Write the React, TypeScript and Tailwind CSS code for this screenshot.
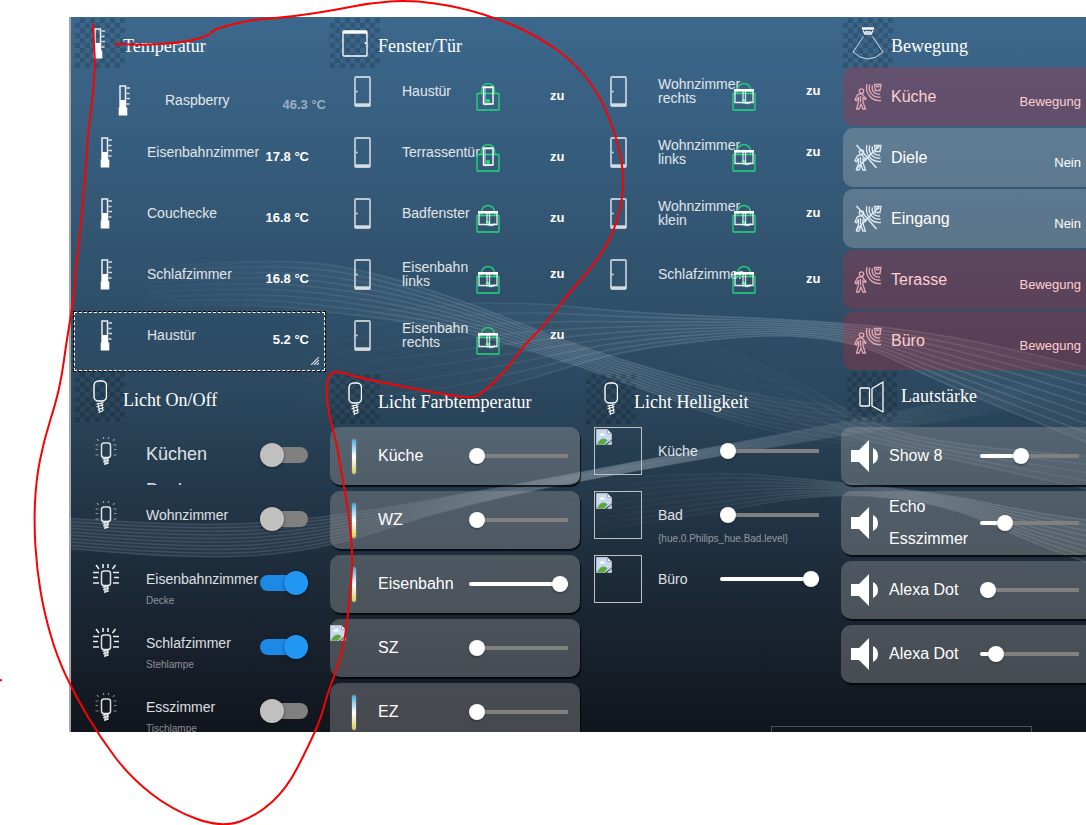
import React, { useState } from "react";

type Point = [number, number];

function smoothPath(points: Point[]): string {
  let d = `M${points[0][0]} ${points[0][1]}`;
  for (let i = 1; i < points.length - 1; i++) {
    const [x, y] = points[i];
    const [nx, ny] = points[i + 1];
    d += ` Q${x} ${y} ${(x + nx) / 2} ${(y + ny) / 2}`;
  }
  const last = points[points.length - 1];
  return d + ` L${last[0]} ${last[1]}`;
}

/* ---------- background ---------- */

type Bundle = { from: Point[]; to: Point[]; count: number; stops: [number, number][] };

const bundles: Bundle[] = [
  {
    from: [[60, 252], [170, 243], [270, 246], [390, 282], [520, 335], [700, 385], [900, 400]],
    to: [[60, 290], [170, 286], [270, 296], [390, 312], [520, 352], [700, 420], [900, 440]],
    count: 9,
    stops: [[0, 0], [0.3, 0.12], [0.6, 0.16], [0.75, 0.06], [1, 0]],
  },
  {
    from: [[200, 310], [330, 290], [450, 284], [560, 296], [760, 304], [880, 318], [1016, 350]],
    to: [[200, 400], [330, 392], [450, 366], [560, 330], [760, 312], [880, 370], [1016, 425]],
    count: 9,
    stops: [[0, 0], [0.2, 0.04], [0.45, 0.14], [0.7, 0.18], [0.85, 0.16], [1, 0.12]],
  },
  {
    from: [[-20, 500], [120, 510], [250, 502], [400, 476], [560, 446], [760, 408], [900, 380], [1016, 350]],
    to: [[-20, 530], [120, 543], [250, 534], [380, 490], [560, 454], [760, 420], [900, 400], [1016, 380]],
    count: 10,
    stops: [[0, 0.13], [0.3, 0.12], [0.55, 0.2], [0.75, 0.08], [1, 0]],
  },
  {
    from: [[480, 470], [620, 452], [760, 464], [880, 478], [960, 495], [1030, 505]],
    to: [[480, 520], [620, 500], [760, 474], [880, 488], [960, 525], [1030, 550]],
    count: 9,
    stops: [[0, 0], [0.35, 0.06], [0.65, 0.18], [1, 0.16]],
  },
  {
    from: [[560, 300], [700, 345], [800, 410], [900, 430], [1030, 440]],
    to: [[560, 320], [700, 400], [800, 425], [900, 446], [1030, 475]],
    count: 5,
    stops: [[0, 0], [0.4, 0.05], [0.65, 0.14], [1, 0.08]],
  },
];

function Waves() {
  return (
    <svg
      className="pointer-events-none absolute inset-0 size-full"
      viewBox="0 0 1016 715"
      preserveAspectRatio="none"
      aria-hidden="true"
    >
      {bundles.map((b, k) => {
        const end = b.from[b.from.length - 1][0];
        return (
          <g key={k} fill="none" stroke={`url(#wave-${k})`} strokeWidth="1.5">
            <defs>
              <linearGradient id={`wave-${k}`} gradientUnits="userSpaceOnUse" x1={b.from[0][0]} y1="0" x2={end} y2="0">
                {b.stops.map(([offset, opacity]) => (
                  <stop key={offset} offset={offset} stopColor="#d3e4f0" stopOpacity={opacity} />
                ))}
              </linearGradient>
            </defs>
            <path
              d={smoothPath(b.from) + smoothPath([...b.to].reverse()).replace("M", " L") + "Z"}
              fill={`url(#wave-${k})`}
              fillOpacity="0.4"
              stroke="none"
            />
            {Array.from({ length: b.count }, (_, i) => {
              const t = i / (b.count - 1);
              const pts = b.from.map((p, j): Point => [
                p[0] + (b.to[j][0] - p[0]) * t,
                p[1] + (b.to[j][1] - p[1]) * t,
              ]);
              return <path key={i} d={smoothPath(pts)} />;
            })}
          </g>
        );
      })}
    </svg>
  );
}

/* ---------- icons ---------- */

function Thermometer() {
  return (
    <svg width="14" height="31" viewBox="0 0 14 31" className="shrink-0" aria-hidden="true">
      <rect x="2" y="1" width="5.500" height="22" fill="none" stroke="#fff" strokeWidth="1.500" strokeOpacity="0.900" />
      <path d="M2 15h5.500v7.500h1.800v8H.7v-8H2z" fill="#fff" />
      <path d="M8.500 3h3.500M8.500 8.500h3M8.500 13.500h3.500M8.500 19h3" stroke="#fff" strokeWidth="1.300" strokeOpacity="0.800" />
    </svg>
  );
}

function Door() {
  return (
    <svg width="17" height="31" viewBox="0 0 17 31" className="shrink-0 opacity-80" aria-hidden="true">
      <rect x="1" y="1" width="15" height="29" rx="1" fill="none" stroke="#fff" strokeOpacity="0.850" strokeWidth="1.800" />
      <path d="M1 28.700h15" stroke="#fff" strokeWidth="2.800" />
      <circle cx="2.800" cy="15.500" r="0.900" fill="#fff" />
    </svg>
  );
}

function Lock({ kind }: { kind: "door" | "window" }) {
  return (
    <svg width="24" height="29" viewBox="0 0 24 29" className="relative shrink-0" aria-hidden="true">
      <path d="M5.500 11V8a6.500 6.500 0 0 1 13 0v3" fill="none" stroke="#24c878" strokeWidth="1.500" />
      <rect x="1" y="11.500" width="22" height="16.500" rx="0.500" fill="none" stroke="#22d97c" strokeWidth="1.300" />
      <circle cx="12" cy="19" r="2.200" fill="#22d97c" />
      {kind === "door" ? (
        <g fill="none" stroke="#fff">
          <path d="M7.500 5.500h9.500v16.500H7.500z" strokeWidth="1.400" />
          <path d="M6.500 5.200h11" strokeWidth="1.600" />
          <path d="M9 6v17l7-1.500" strokeWidth="1" strokeOpacity="0.700" />
        </g>
      ) : (
        <g fill="none" stroke="#fff">
          <path d="M12 17v5" stroke="#22d97c" strokeWidth="3" />
          <path d="M3 9v11.500h18V9" strokeWidth="1.300" strokeOpacity="0.900" />
          <path d="M2 8.300h20" strokeWidth="2.600" />
          <path d="M11 9v10M13.500 9v12q3 1.500 5.500-1.500" strokeWidth="1.400" strokeOpacity="0.750" />
        </g>
      )}
    </svg>
  );
}

function WindowIcon() {
  return (
    <svg width="26" height="27" viewBox="0 0 26 27" aria-hidden="true">
      <rect x="1" y="1" width="24" height="25" rx="1" fill="none" stroke="#fff" strokeWidth="1.300" />
      <path d="M1 2.300h24" stroke="#fff" strokeWidth="2.800" />
      <circle cx="23.500" cy="13" r="1" fill="#fff" />
    </svg>
  );
}

function SensorIcon() {
  return (
    <svg width="32" height="33" viewBox="0 0 32 33" fill="none" stroke="#fff" aria-hidden="true">
      <path d="M10 1.500h12" strokeWidth="2.400" />
      <path d="M11 3.500l2 3.500h6l2-3.500M13 5h6" strokeWidth="1.300" />
      <path d="M11.500 9.500L1 25q15 14 30 0L20.500 9.500" strokeWidth="0.900" strokeOpacity="0.850" />
    </svg>
  );
}

function BulbHeader() {
  return (
    <svg width="14" height="34" viewBox="0 0 14 34" fill="none" stroke="#fff" aria-hidden="true">
      <rect x="1" y="1" width="12.500" height="20" rx="4.500" strokeWidth="1.400" />
      <path d="M3.500 24l7 -1.500M3.500 27l7-2.500M4.500 30l6-2.500M5.500 32.500l4-1.500M5 23l1.500 9M8.500 22.500L10 31" strokeWidth="1.100" />
    </svg>
  );
}

function BulbRow({ on }: { on: boolean }) {
  return (
    <svg width="28" height="32" viewBox="0 0 28 32" fill="none" stroke="#fff" className="shrink-0" aria-hidden="true">
      <rect x="9.500" y="8" width="9" height="14.500" rx="2.500" strokeWidth="1.500" strokeOpacity="0.850" />
      <path d="M10.500 24l6.500-1M11 26.500l6-1.500M12 29l4.500-1.500M12.500 23l1 7M15 23l1 6" strokeWidth="1.500" strokeOpacity="0.850" />
      {on ? (
        <path
          d="M4 2l3 4M11 1v4M16 1v4M23.500 2l-3 4M1 9.500h6M1 14.500h5M1 20h6M21 9.500h6M22 14.500h5M21 20h6"
          strokeWidth="1.600"
          strokeOpacity="0.900"
        />
      ) : (
        <path
          d="M5 4l1.500 2M11.500 2v2M16.500 2v2M22.500 4l-1.500 2M3.500 10h3M3.500 14.500h2.500M3.500 20h3M21.500 10h3M22 14.500h2.500M21.500 20h3"
          strokeWidth="1.200"
          strokeOpacity="0.500"
        />
      )}
    </svg>
  );
}

function SpeakerOutline() {
  return (
    <svg width="26" height="32" viewBox="0 0 26 32" fill="none" stroke="#fff" strokeWidth="1.300" aria-hidden="true">
      <rect x="1" y="7" width="9.500" height="18" rx="1" />
      <path d="M13 7.500L24 1v30L13 25z" strokeLinejoin="round" />
    </svg>
  );
}

function SpeakerSolid() {
  return (
    <svg width="27" height="32" viewBox="0 0 27 32" fill="#fff" className="shrink-0" aria-hidden="true">
      <path d="M0 10h8L18 0v32L8 22H0z" />
      <path d="M22 8q5 2.500 5 8t-5 8z" />
    </svg>
  );
}

function MotionIcon({ active }: { active: boolean }) {
  const color = active ? "#e0a9b4" : "#e0eaf2";
  return (
    <svg width="28" height="28" viewBox="0 0 28 28" fill="none" stroke={color} strokeWidth="1.300" className="shrink-0" aria-hidden="true">
      <path d="M20.500 1.500h6.500l-1 6h-4.500zM22 3.500h3.500" />
      <path d="M18.500 2.500A6.500 6.500 0 0 0 26 11M15.800 1.500A9.500 9.500 0 0 0 26.500 14M13 1A13 13 0 0 0 27 17.500" />
      <circle cx="7.500" cy="8" r="2.200" />
      <path d="M6 11q-2.500 0-3.500 2.500L1 17l1.500.8L4.500 14v5L2.500 26H5l2-5 2 5h2.500L9 19v-4l2.500 1.500.5-1.200L9.500 13 8.500 11zM6.500 13v6" />
      {!active && <path d="M2.500 1l20 23M25 2L2 25" strokeWidth="1.500" />}
    </svg>
  );
}

function BrokenImage() {
  return (
    <svg width="16" height="16" viewBox="0 0 16 16" aria-hidden="true">
      <path d="M.5.500h11l4 4v6L9 15.500H.5z" fill="#c6d8f6" stroke="#b8b8b8" />
      <path d="M11.500.500v4h4z" fill="#fff" stroke="#a8a8a8" />
      <path d="M3 6.500q.3-1.800 2-1.800.8-1.500 2.200-.5 1.800.3 1.800 2.300z" fill="#fff" />
      <path d="M1 15.500q2.500-6 6.500-6 2.500 0 4 2L8 15.500z" fill="#59a93b" />
      <path d="M11.500 15.500l4-3.500v3.500z" fill="#c6d8f6" stroke="#b8b8b8" />
    </svg>
  );
}

function TemperatureBar() {
  return (
    <span className="block h-[35px] w-1 rounded-full bg-linear-to-b from-[#3aa9dc] via-white to-[#d9cc45] shadow-[0_0_2px_rgba(255,255,255,0.35)]" />
  );
}

/* ---------- shared parts ---------- */

function Header({ title, icon, shift = false, high = false }: { title: string; icon: React.ReactNode; shift?: boolean; high?: boolean }) {
  return (
    <header className={shift ? "flex h-[50px] gap-1 pl-1" : "flex h-[50px]"}>
      <span className="flex size-[50px] shrink-0 items-center justify-center bg-[repeating-conic-gradient(rgba(0,0,0,0.16)_0_25%,transparent_0_50%)] bg-[length:10px_10px]">
        {icon}
      </span>
      <h2
        className={
          high
            ? "pt-[14px] font-['Liberation_Serif',serif] text-[18px] leading-5 whitespace-nowrap text-white"
            : "-ml-0.5 pt-[18px] font-['Liberation_Serif',serif] text-[18px] leading-5 whitespace-nowrap text-white"
        }
      >
        {title}
      </h2>
    </header>
  );
}

function Slider({ label, initial }: { label: string; initial: number }) {
  const [value, setValue] = useState(initial);
  return (
    <input
      type="range"
      aria-label={label}
      value={value}
      onChange={(e) => setValue(Number(e.target.value))}
      style={{ background: `linear-gradient(to right, #fff ${value}%, #808080 ${value}%)` }}
      className="block h-1 w-[99px] shrink-0 appearance-none rounded-l-full [&::-webkit-slider-thumb]:size-4 [&::-webkit-slider-thumb]:appearance-none [&::-webkit-slider-thumb]:rounded-full [&::-webkit-slider-thumb]:bg-white [&::-webkit-slider-thumb]:shadow-[0_1px_2px_rgba(0,0,0,0.4)]"
    />
  );
}

function Toggle({ label, initial }: { label: string; initial: boolean }) {
  const [on, setOn] = useState(initial);
  return (
    <input
      type="checkbox"
      role="switch"
      aria-label={label}
      checked={on}
      onChange={(e) => setOn(e.target.checked)}
      className="flex h-4 w-12 shrink-0 appearance-none items-center rounded-full bg-[#808080] before:block before:size-6 before:rounded-full before:bg-[#c0c0c0] before:shadow-[0_1px_3px_rgba(0,0,0,0.5)] checked:bg-[#1e88e5] checked:before:translate-x-6 checked:before:bg-[#2196f3]"
    />
  );
}

/* ---------- widgets ---------- */

const temperatures = [
  { name: "Raspberry", value: "46.3 °C", stale: true },
  { name: "Eisenbahnzimmer", value: "17.8 °C" },
  { name: "Couchecke", value: "16.8 °C" },
  { name: "Schlafzimmer", value: "16.8 °C" },
  { name: "Haustür", value: "5.2 °C", selected: true },
];

function TemperatureRow({ item }: { item: (typeof temperatures)[number] }) {
  return (
    <li className={item.stale ? "relative flex h-[61px] pt-[18px] pl-12" : "relative flex h-[61px] pt-[9px] pl-[30px]"}>
      <Thermometer />
      <span className="mt-2 ml-[33px] w-[114px] text-[14px] leading-[14px] whitespace-nowrap text-white/85">{item.name}</span>
      <span
        className={
          item.stale
            ? "mt-[13px] w-12 text-right text-[13px] leading-[14px] font-bold whitespace-nowrap text-white/50"
            : "mt-[13px] w-12 text-right text-[13px] leading-[14px] font-bold whitespace-nowrap text-white"
        }
      >
        {item.value}
      </span>
      {item.selected && (
        <span className="absolute inset-y-0 right-0 left-[3px] border border-dashed border-black">
          <span className="block size-full border border-dashed border-white" />
          <svg className="absolute right-1.5 bottom-1.5" width="8" height="8" viewBox="0 0 8 8" aria-hidden="true">
            <path d="M0 8L8 0M3 8l5-5M6 8l2-2" stroke="#d5dbe0" strokeWidth="1.200" />
          </svg>
        </span>
      )}
    </li>
  );
}

type Opening = { name: string; kind: "door" | "window"; twoLines?: boolean };

const openingsA: Opening[] = [
  { name: "Haustür", kind: "door" },
  { name: "Terrassentür", kind: "door" },
  { name: "Badfenster", kind: "window" },
  { name: "Eisenbahn links", kind: "window", twoLines: true },
  { name: "Eisenbahn rechts", kind: "window", twoLines: true },
];

const openingsB: Opening[] = [
  { name: "Wohnzimmer rechts", kind: "window", twoLines: true },
  { name: "Wohnzimmer links", kind: "window", twoLines: true },
  { name: "Wohnzimmer klein", kind: "window", twoLines: true },
  { name: "Schlafzimmer", kind: "window" },
];

function OpeningRow({ item }: { item: Opening }) {
  return (
    <li className="flex h-[61px] pt-[9px] pl-7">
      <Door />
      <span className="ml-[31px] flex h-[30px] w-[74px] items-center text-[14px] leading-[14px] text-white/85">{item.name}</span>
      <span className="pt-1.5">
        <Lock kind={item.kind} />
      </span>
      <span
        className={
          item.twoLines
            ? "mt-2 ml-[50px] text-[13px] leading-[14px] font-bold text-white"
            : "mt-[13px] ml-[50px] text-[13px] leading-[14px] font-bold text-white"
        }
      >
        zu
      </span>
    </li>
  );
}

const motions = [
  { name: "Küche", active: true },
  { name: "Diele", active: false },
  { name: "Eingang", active: false },
  { name: "Terasse", active: true },
  { name: "Büro", active: true },
];

function MotionCard({ name, active }: { name: string; active: boolean }) {
  return (
    <li
      className={
        active
          ? "flex h-[59px] items-center rounded-[10px] bg-[#e01c2c]/25 pr-[13px] pl-[11px] text-[#ffd0d0]"
          : "flex h-[59px] items-center rounded-[10px] bg-[#d4d4d4]/26 pr-[13px] pl-[11px] text-white"
      }
    >
      <MotionIcon active={active} />
      <span className="ml-[9px] flex-1 text-[16px] leading-5">{name}</span>
      <span className="pt-2.5 text-[13px] leading-4">{active ? "Bewegung" : "Nein"}</span>
    </li>
  );
}

const lights = [
  { name: "Küchen Decke", on: false, large: true },
  { name: "Wohnzimmer", on: false },
  { name: "Eisenbahnzimmer", on: true, sub: "Decke" },
  { name: "Schlafzimmer", on: true, sub: "Stehlampe" },
  { name: "Esszimmer", on: false, sub: "Tischlampe" },
];

function LightRow({ item }: { item: (typeof lights)[number] }) {
  return (
    <li className="flex h-[58px] overflow-hidden pl-[22px]">
      <span className="pt-2">
        <BulbRow on={item.on} />
      </span>
      <span className="ml-[26px] w-[114px] text-white/85">
        {item.large ? (
          <span className="block w-[70px] pt-[9px] text-[18px] leading-9">{item.name}</span>
        ) : (
          <span className="block pt-4 text-[14px] leading-4">{item.name}</span>
        )}
        {item.sub && <span className="mt-2 block text-[10px] leading-3 text-white/50">{item.sub}</span>}
      </span>
      <span className="flex h-14 items-center">
        <Toggle label={item.name} initial={item.on} />
      </span>
    </li>
  );
}

const cardClass =
  "relative flex h-[58px] items-center rounded-[10px] bg-[#a0a0a0]/37 shadow-[1px_2px_1px_rgba(0,0,0,0.75)]";

const colourTemps = [
  { name: "Küche", value: 0 },
  { name: "WZ", value: 0 },
  { name: "Eisenbahn", value: 100 },
  { name: "SZ", value: 0, broken: true },
  { name: "EZ", value: 0 },
];

const brightness = [
  { name: "Küche", value: 0 },
  { name: "Bad", value: 0, sub: "{hue.0.Philips_hue.Bad.level}" },
  { name: "Büro", value: 100 },
];

const volumes = [
  { name: "Show 8", value: 40 },
  { name: "Echo Esszimmer", value: 20, tall: true },
  { name: "Alexa Dot", value: 0 },
  { name: "Alexa Dot", value: 10 },
];

/* ---------- hand-drawn marker ---------- */

const marker: Point[] = [
  [93, 24], [94, 45], [95, 62], [94, 80], [92, 105], [88, 132], [87, 155], [83, 200], [80, 235], [76, 265], [75, 285],
  [71, 315], [66, 345], [62, 375], [56, 402], [44, 440], [36, 480], [34, 525], [37, 570], [44, 612], [57, 657], [76, 697],
  [100, 737], [130, 777], [172, 810], [222, 828], [258, 815], [287, 788], [308, 747], [321, 718], [327, 695], [338, 666],
  [345, 640], [350, 595], [353, 560], [349, 515], [341, 470], [336, 440], [328, 412], [326, 385], [331, 371], [345, 373],
  [360, 378], [420, 390], [472, 399], [484, 392], [508, 368], [524, 345], [545, 325], [568, 294], [600, 258], [618, 222],
  [625, 180], [617, 138], [600, 95], [572, 60], [538, 37], [507, 22], [460, 7], [410, 0], [370, 3], [335, 10], [290, 17],
  [250, 20], [226, 26], [213, 30], [210, 35], [187, 42], [150, 45], [115, 44],
];

function Marker() {
  return (
    <svg
      className="pointer-events-none absolute top-0 left-0"
      width="640"
      height="825"
      viewBox="0 0 640 825"
      fill="none"
      stroke="#f80202"
      strokeWidth="2"
      strokeLinecap="round"
      strokeLinejoin="round"
      aria-hidden="true"
    >
      <path d={smoothPath(marker)} />
      <path d="M1 680v.5" />
    </svg>
  );
}

export default function App() {
  return (
    <div className="relative flex h-screen flex-col overflow-hidden bg-white pt-[17px] pb-[93px] pl-[69px] font-['Liberation_Sans',Arial,sans-serif]">
      <main className="relative min-h-0 flex-1 overflow-hidden border-l-2 border-[#a6a6a6] bg-linear-to-b from-[#3c688d] from-0% via-[#2b485f] via-52% to-[#11151d] to-100%">
        <Waves />
        <div className="relative -ml-px grid w-[calc(100%+9px)] grid-cols-4">
          <section className="pt-px">
            <div className="pl-[5px]">
              <Header title="Temperatur" icon={<Thermometer />} />
            </div>
            <ul className="-mt-px">
              {temperatures.map((t) => (
                <TemperatureRow key={t.name} item={t} />
              ))}
            </ul>
          </section>

          <section className="pt-px">
            <div className="pl-1">
              <Header title="Fenster/Tür" icon={<WindowIcon />} />
            </div>
            <ul className="-mt-px">
              {openingsA.map((o) => (
                <OpeningRow key={o.name} item={o} />
              ))}
            </ul>
          </section>

          <section className="pt-[50px]">
            <ul>
              {openingsB.map((o) => (
                <OpeningRow key={o.name} item={o} />
              ))}
            </ul>
          </section>

          <section className="pt-px pl-[5px]">
            <Header title="Bewegung" icon={<SensorIcon />} />
            <ul className="-mt-px flex flex-col gap-0.5">
              {motions.map((m) => (
                <MotionCard key={m.name} name={m.name} active={m.active} />
              ))}
            </ul>
          </section>

          <section>
            <div className="pb-[5px] pl-[5px]">
              <Header title="Licht On/Off" icon={<BulbHeader />} />
            </div>
            <ul className="flex flex-col gap-1.5">
              {lights.map((l) => (
                <LightRow key={l.name} item={l} />
              ))}
            </ul>
          </section>

          <section className="pt-0.5 pr-0.5 pl-1">
            <div className="pb-[3px]">
              <Header title="Licht Farbtemperatur" icon={<BulbHeader />} />
            </div>
            <ul className="flex flex-col gap-1.5">
              {colourTemps.map((c) => (
                <li key={c.name} className={cardClass}>
                  {c.broken ? (
                    <span className="w-12 self-start pt-1.5">
                      <BrokenImage />
                    </span>
                  ) : (
                    <span className="w-12 pl-[22px]">
                      <TemperatureBar />
                    </span>
                  )}
                  <span className="w-[91px] text-[16px] leading-5 text-white">{c.name}</span>
                  <Slider label={c.name} initial={c.value} />
                </li>
              ))}
            </ul>
          </section>

          <section className="pt-0.5 pl-1">
            <div className="pb-[3px]">
              <Header title="Licht Helligkeit" icon={<BulbHeader />} />
            </div>
            <ul className="flex flex-col gap-1.5 pl-2">
              {brightness.map((b) => (
                <li key={b.name} className="h-[58px]">
                  <div className="flex h-12 items-center">
                    <span className="size-12 shrink-0 border border-[#c0c0c0] p-px">
                      <BrokenImage />
                    </span>
                    <span className="ml-4 w-[62px] text-[14px] leading-[14px] text-white/85">{b.name}</span>
                    <Slider label={b.name} initial={b.value} />
                  </div>
                  {b.sub && <p className="-mt-1.5 pl-16 text-[10px] leading-3 text-white/50">{b.sub}</p>}
                </li>
              ))}
            </ul>
          </section>

          <section className="pl-[3px]">
            <div className="pb-[5px] pl-0.5">
              <Header title="Lautstärke" icon={<SpeakerOutline />} shift high />
            </div>
            <ul className="flex flex-col gap-1.5">
              {volumes.map((v, i) => (
                <li
                  key={i}
                  className={
                    v.tall
                      ? "flex h-16 items-center rounded-[10px] bg-[#a0a0a0]/37 pl-2.5 shadow-[1px_2px_1px_rgba(0,0,0,0.75)]"
                      : "flex h-[58px] items-center rounded-[10px] bg-[#a0a0a0]/37 pl-2.5 shadow-[1px_2px_1px_rgba(0,0,0,0.75)]"
                  }
                >
                  <SpeakerSolid />
                  <span className="ml-[11px] w-[91px] text-[16px] leading-8 text-white">{v.name}</span>
                  <Slider label={v.name} initial={v.value} />
                </li>
              ))}
            </ul>
          </section>
        </div>
        <div className="absolute bottom-0 left-[700px] h-1.5 w-[261px] border-x border-t border-[#4b5259]" />
      </main>
      <Marker />
    </div>
  );
}
